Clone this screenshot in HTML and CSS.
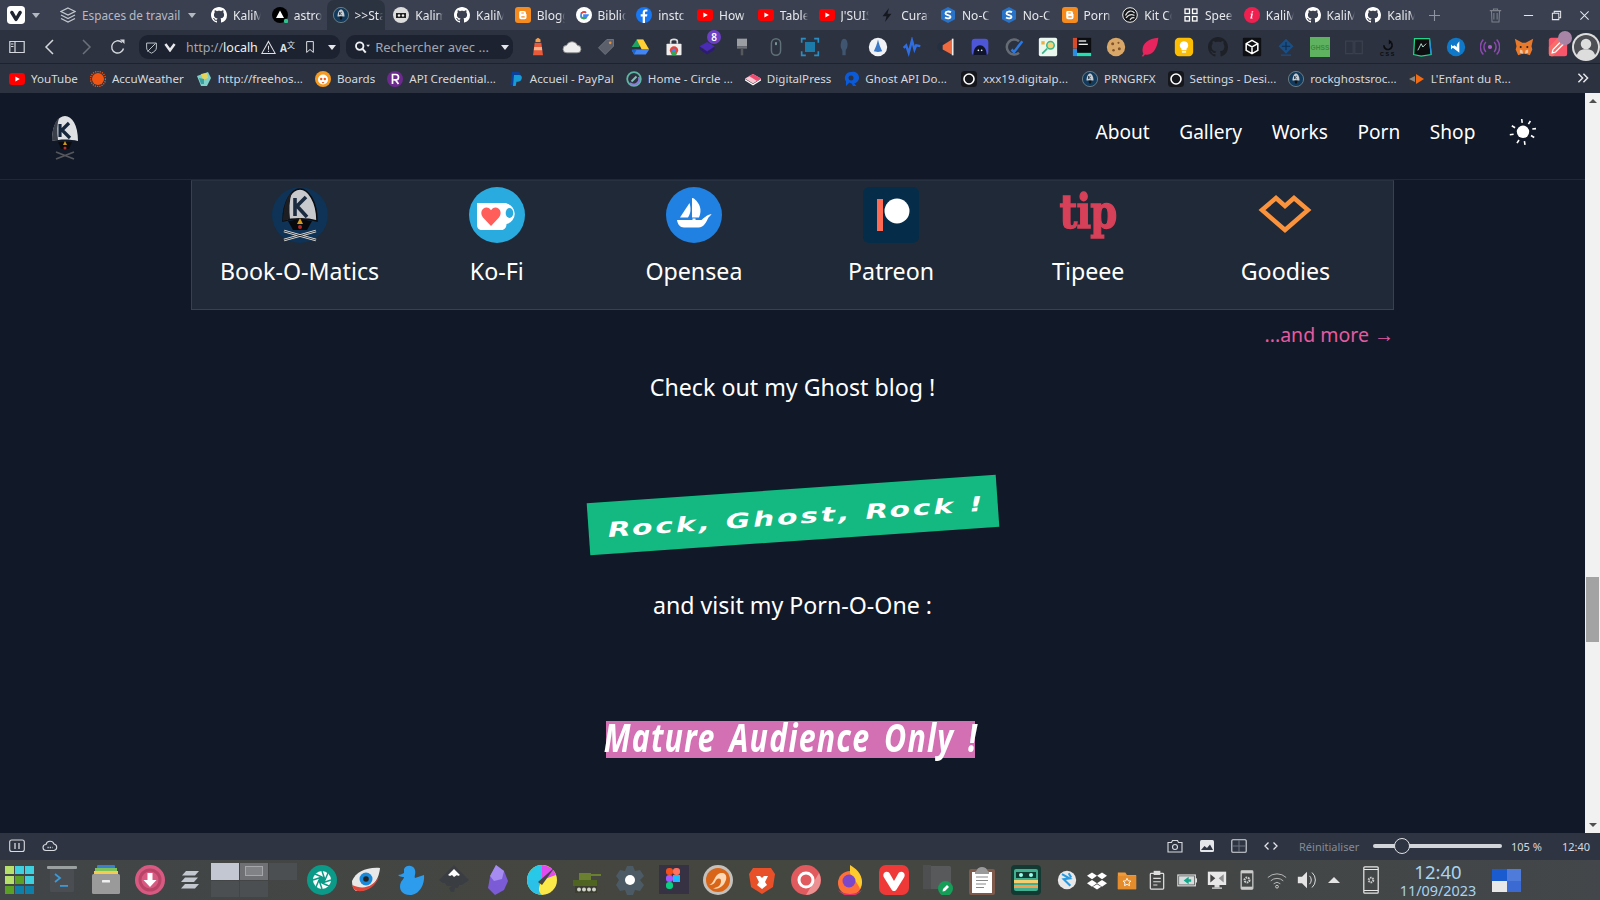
FILE: index.html
```html
<!DOCTYPE html>
<html lang="fr">
<head>
<meta charset="utf-8">
<title>Rock Ghost</title>
<link rel="stylesheet" href="styles.css">
</head>
<body>
<svg class="defs" xmlns="http://www.w3.org/2000/svg">
  <symbol id="gh" viewBox="0 0 16 16"><path fill="currentColor" d="M8 0C3.58 0 0 3.58 0 8c0 3.54 2.29 6.53 5.47 7.59.4.07.55-.17.55-.38 0-.19-.01-.82-.01-1.49-2.01.37-2.53-.49-2.69-.94-.09-.23-.48-.94-.82-1.13-.28-.15-.68-.52-.01-.53.63-.01 1.08.58 1.23.82.72 1.21 1.87.87 2.33.66.07-.52.28-.87.51-1.07-1.78-.2-3.64-.89-3.64-3.95 0-.87.31-1.59.82-2.15-.08-.2-.36-1.02.08-2.12 0 0 .67-.21 2.2.82.64-.18 1.32-.27 2-.27s1.36.09 2 .27c1.53-1.04 2.2-.82 2.2-.82.44 1.1.16 1.92.08 2.12.51.56.82 1.27.82 2.15 0 3.07-1.87 3.75-3.65 3.95.29.25.54.73.54 1.48 0 1.07-.01 1.93-.01 2.2 0 .21.15.46.55.38A8.013 8.013 0 0016 8c0-4.42-3.58-8-8-8z"/></symbol>
  <symbol id="yt" viewBox="0 0 16 16"><rect y="2" width="16" height="12" rx="3.2" fill="#f00"/><path d="M6.4 5.4v5.2L10.8 8z" fill="#fff"/></symbol>
  <symbol id="astro" viewBox="0 0 16 16"><circle cx="8" cy="8" r="8" fill="#000"/><path d="M8 3.5l4 7.5H4z" fill="#fff"/><circle cx="14" cy="14" r="2.2" fill="#2fc48d"/></symbol>
  <symbol id="skull" viewBox="0 0 16 16"><circle cx="8" cy="8" r="7.6" fill="#123a5c" stroke="#9aa" stroke-width=".6"/><path d="M4.5 9.5C4.5 5 6.5 2.4 8 2.4s3.500 2.600 3.500 7.100z" fill="#c9ccd0"/><path d="M6.500 9.500h3l-.6 3H7.100z" fill="#111"/><path d="M6.500 5v3M6.800 6.500l2-1.500M6.800 6.500l2 1.500" stroke="#1a2a3a" stroke-width=".8" fill="none"/></symbol>
  <symbol id="kali" viewBox="0 0 16 16"><circle cx="8" cy="8" r="8" fill="#ddd"/><path d="M3 6h10v5H3z" fill="#222"/><circle cx="6" cy="8.500" r="1.200" fill="#eee"/><circle cx="10" cy="8.500" r="1.200" fill="#eee"/></symbol>
  <symbol id="blogger" viewBox="0 0 16 16"><rect width="16" height="16" rx="3" fill="#f58a1f"/><path d="M5 4h4a2 2 0 012 2v1h.500v3.500A1.800 1.800 0 019.700 12.300H6A1.800 1.800 0 014.200 10.500V5z" fill="#fff"/><path d="M6.300 6h2.500M6.300 9.800h3.400" stroke="#f58a1f" stroke-width="1.200"/></symbol>
  <symbol id="google" viewBox="0 0 16 16"><circle cx="8" cy="8" r="8" fill="#fff"/><path d="M12.800 8H8v1.600h2.700A3 3 0 015 8a3 3 0 015-2.200" fill="none" stroke="#4285f4" stroke-width="1.700"/><path d="M5.200 6.500A3.200 3.200 0 0110 5.700" fill="none" stroke="#ea4335" stroke-width="1.700"/><path d="M5 9.500A3.200 3.200 0 0010.300 10.500" fill="none" stroke="#34a853" stroke-width="1.700"/></symbol>
  <symbol id="fb" viewBox="0 0 16 16"><circle cx="8" cy="8" r="8" fill="#1877f2"/><path d="M9 16V9.500h2l.4-2.300H9V5.800c0-.7.3-1.200 1.300-1.200h1.100v-2C11 2.500 10.400 2.400 9.800 2.400 8 2.400 6.700 3.500 6.700 5.500v1.700H4.700v2.300h2V16z" fill="#fff"/></symbol>
  <symbol id="bolt" viewBox="0 0 16 16"><path d="M10 1L3.500 9.200h4L6 15l6.500-8.300h-4z" fill="#15181f"/></symbol>
  <symbol id="nocode" viewBox="0 0 16 16"><path d="M8 0l7 3.800v8.400L8 16l-7-3.800V3.800z" fill="#2872c8"/><path d="M11 5.300C9 4 5.500 4.300 5.500 6.300c0 2.500 5 1.200 5 3.500 0 2-3.500 2-5.500.8" fill="none" stroke="#fff" stroke-width="1.800"/></symbol>
  <symbol id="kit" viewBox="0 0 16 16"><circle cx="8" cy="8" r="7.300" fill="#14161a" stroke="#eee" stroke-width="1"/><path d="M3.500 8.500C6 3 10 3 12.500 6M4 11c3-4 6-4 8.500-2.500M8 13c1-2 3-3 4.500-2" fill="none" stroke="#ddd" stroke-width="1.200"/></symbol>
  <symbol id="speed" viewBox="0 0 16 16"><g fill="none" stroke="#fff" stroke-width="1.300"><rect x="2" y="2" width="4.500" height="4.500"/><rect x="9.500" y="2" width="4.500" height="4.500"/><rect x="2" y="9.500" width="4.500" height="4.500"/><rect x="9.500" y="9.500" width="4.500" height="4.500"/></g></symbol>
  <symbol id="inf" viewBox="0 0 16 16"><circle cx="8" cy="8" r="8" fill="#ef2050"/><path d="M9.300 4.200h-1.500l-.3 1.300h1.500zM8.900 6.500H6.800l-.2.900h.8l-1.200 4.200h2.300l.2-.8h-.8z" fill="#fff"/></symbol>
  <symbol id="accu" viewBox="0 0 16 16"><circle cx="8" cy="8" r="6" fill="#f05514"/><circle cx="8" cy="8" r="7.500" fill="none" stroke="#f05514" stroke-width="1.400" stroke-dasharray="1.200 1.100"/></symbol>
  <symbol id="free" viewBox="0 0 16 16"><path d="M1 5l11-4 3 6-4 8H5z" fill="#7fd0c8"/><path d="M5 3l6-1 1 5-5 2z" fill="#e6d45a"/><path d="M3 7l5 1v5H5z" fill="#3aa0a0"/></symbol>
  <symbol id="boards" viewBox="0 0 16 16"><circle cx="8" cy="8" r="8" fill="#f59a23"/><circle cx="8" cy="8.500" r="5" fill="#fff"/><circle cx="6.200" cy="8" r="1.200" fill="#f05a14"/><circle cx="9.800" cy="8" r="1.200" fill="#f05a14"/><path d="M6.500 11h3L8 12.500z" fill="#f05a14"/></symbol>
  <symbol id="rr" viewBox="0 0 16 16"><circle cx="8" cy="8" r="8" fill="#6d2a8e"/><path d="M5.500 13V3.500h3.300a2.700 2.700 0 010 5.400H6.500M8.500 9l3 4" fill="none" stroke="#fff" stroke-width="1.700"/></symbol>
  <symbol id="paypal" viewBox="0 0 16 16"><path d="M4 1h5c3 0 4 2 3.300 4.300C11.700 7.500 10 8.500 8 8.500H6.500L5.500 14H2.500z" fill="#0a3f9c"/><path d="M6 4h5c2.500 0 3.300 1.800 2.700 3.800C13 10 11.500 10.700 9.800 10.700H8.500l-.8 4.300H5z" fill="#179bd7"/></symbol>
  <symbol id="circ" viewBox="0 0 16 16"><circle cx="8" cy="8" r="6.800" fill="none" stroke="#5db5a5" stroke-width="1.800"/><path d="M4 12A5.500 5.500 0 0012.800 6" fill="none" stroke="#8a7fd8" stroke-width="1.800"/><path d="M5.500 10.500L10.500 5.500" stroke="#7cc6b8" stroke-width="2"/></symbol>
  <symbol id="dp" viewBox="0 0 16 16"><path d="M8 3l8 4.500-8 5-8-5z" fill="#f9c8d4"/><path d="M8 3l8 4.500-4 2.500-8-5z" fill="#f04a70"/><path d="M0 8l8 5 8-5v1.500l-8 5-8-5z" fill="#fff"/></symbol>
  <symbol id="ghost" viewBox="0 0 16 16"><path d="M8 1a6 6 0 00-5 9.500L3 15l3.500-3.500A6 6 0 108 1zm0 3.500a2.500 2.500 0 110 5 2.500 2.500 0 010-5z" fill="#0b5bd8"/><path d="M10 11l3.500 4H10l-2-4z" fill="#0b5bd8"/></symbol>
  <symbol id="ring" viewBox="0 0 16 16"><rect width="16" height="16" rx="3.500" fill="#15171c"/><circle cx="8" cy="8" r="5" fill="none" stroke="#fff" stroke-width="1.600"/></symbol>
  <symbol id="enfant" viewBox="0 0 16 16"><path d="M0 0l8 8-8 8z" fill="#333"/><path d="M0 8l6-3v6z" fill="#888"/><path d="M7 3l8 5-8 5z" fill="#f46a10"/></symbol>
  <symbol id="vivaldi" viewBox="0 0 24 24"><rect width="24" height="24" rx="5" fill="#fff"/><path d="M5 7c1.500-1 3-.5 3.800 1l3.200 5.700L15.200 8c.8-1.500 2.300-2 3.800-1 1 .8 1 2 .4 3l-5.500 9c-1.100 1.700-2.700 1.700-3.800 0l-5.500-9c-.6-1-.6-2.200.4-3z" fill="#1f2430"/></symbol>
  <symbol id="e1" viewBox="0 0 24 24"><path d="M9 3l3-2 3 2v3H9z" fill="#f6a04c"/><path d="M8 7h8l2 15H6z" fill="#e85a3a"/><path d="M7.500 12h9l.5 4H7z" fill="#f7b48c"/></symbol>
  <symbol id="e2" viewBox="0 0 24 24"><path d="M6 19a4.500 4.500 0 01-.5-9A7 7 0 0118.500 10 4.500 4.500 0 0118 19z" fill="#eee" stroke="#888" stroke-width="1"/></symbol>
  <symbol id="e3" viewBox="0 0 24 24"><path d="M13 3h8v8L11 21l-8-8z" fill="#5b606c" stroke="#767b86"/><circle cx="17" cy="7" r="1.600" fill="#e8903a"/></symbol>
  <symbol id="e4" viewBox="0 0 24 24"><path d="M8 3h8l-5 9H2z" fill="#1ea362"/><path d="M16 3l7 12h-9L8 3z" fill="#ffcf33"/><path d="M2 16l3 5h14l4-6H7z" fill="#4285f4"/><path d="M2 15h6l-3 6z" fill="#1967d2"/></symbol>
  <symbol id="e5" viewBox="0 0 24 24"><rect x="3" y="8" width="18" height="14" rx="1" fill="#eee"/><path d="M8 8V5c0-3 8-3 8 0v3" fill="none" stroke="#ddd" stroke-width="2"/><circle cx="12" cy="16" r="5" fill="#ea4335"/><path d="M12 16l-4 4a5 5 0 008 0z" fill="#34a853"/><circle cx="12" cy="16" r="2.200" fill="#4285f4"/></symbol>
  <symbol id="e6" viewBox="0 0 24 24"><path d="M11 6l9 5-9 6-9-6z" fill="#4a2bb8"/><path d="M2 12l9 6 9-6v3l-9 6-9-6z" fill="#2e1a78"/></symbol>
  <symbol id="e7" viewBox="0 0 24 24"><rect x="6" y="2" width="12" height="9" fill="#9b9ea3"/><rect x="6" y="11" width="12" height="3" fill="#6e7176"/><rect x="10.500" y="14" width="3" height="8" fill="#55585d"/></symbol>
  <symbol id="e8" viewBox="0 0 24 24"><rect x="6.500" y="2" width="11" height="20" rx="5.500" fill="none" stroke="#5f7078" stroke-width="1.800"/><rect x="11" y="6" width="2" height="4" rx="1" fill="#8aa"/></symbol>
  <symbol id="e9" viewBox="0 0 24 24"><path d="M2 7V2h5M17 2h5v5M22 17v5h-5M7 22H2v-5" fill="none" stroke="#2a8ec4" stroke-width="2"/><rect x="6" y="6" width="12" height="12" fill="#1c7ba8"/></symbol>
  <symbol id="e10" viewBox="0 0 24 24"><path d="M12 2c4 0 5 6 4 10-.6 2.500-2 3-2 5v5h-4v-5c0-2-2-3-2-6 0-4 1-9 4-9z" fill="#3f5570"/></symbol>
  <symbol id="e11" viewBox="0 0 24 24"><circle cx="12" cy="12" r="11" fill="#f0f2f5"/><path d="M12 3c1 5 3 10 5 14l-5 1-5-1c2-4 4-9 5-14z" fill="#3a78c8"/></symbol>
  <symbol id="e12" viewBox="0 0 24 24"><path d="M2 13l3-3 3 9 4-15 3 11 2-5 5 1" fill="none" stroke="#2f6ee2" stroke-width="2.800"/></symbol>
  <symbol id="e13" viewBox="0 0 24 24"><circle cx="7" cy="12" r="5.500" fill="#223040"/><path d="M8 10l11-7v18L8 15z" fill="#ef6a3f"/><rect x="19" y="2" width="2" height="20" fill="#eee"/></symbol>
  <symbol id="e14" viewBox="0 0 24 24"><rect x="2" y="2" width="20" height="20" rx="4" fill="#4e56d8"/><path d="M4 22c0-7 3-12 8-12s8 5 8 12z" fill="#10142a"/><circle cx="10" cy="16" r="1" fill="#fff"/><circle cx="14" cy="16" r="1" fill="#fff"/></symbol>
  <symbol id="e15" viewBox="0 0 24 24"><path d="M18 5a9 9 0 100 14" fill="none" stroke="#666c76" stroke-width="3"/><path d="M9 15l3 3L22 5" fill="none" stroke="#2a78e0" stroke-width="3"/></symbol>
  <symbol id="e16" viewBox="0 0 24 24"><rect x="1" y="1" width="22" height="22" rx="2" fill="#e9f7ef"/><circle cx="15" cy="10" r="4.500" fill="#f3d27a" stroke="#38b58a" stroke-width="1.800"/><path d="M11 14l-6 6" stroke="#38b58a" stroke-width="2"/><rect x="4" y="5" width="4" height="4" fill="#f0b040"/></symbol>
  <symbol id="e17" viewBox="0 0 24 24"><rect x="1" y="1" width="22" height="22" fill="#0c0d10"/><rect x="1" y="1" width="5" height="13" fill="#d84b2a"/><rect x="1" y="14" width="5" height="9" fill="#2a8ee0"/><rect x="6" y="19" width="17" height="4" fill="#22e0b0"/><rect x="8" y="4" width="9" height="1.600" fill="#eee"/><rect x="8" y="8" width="11" height="1.600" fill="#eee"/></symbol>
  <symbol id="e18" viewBox="0 0 24 24"><circle cx="12" cy="12" r="11" fill="#d9a869"/><circle cx="8" cy="8" r="1.800" fill="#84552a"/><circle cx="15" cy="7" r="1.300" fill="#84552a"/><circle cx="16" cy="14" r="1.800" fill="#84552a"/><circle cx="9" cy="16" r="1.500" fill="#84552a"/></symbol>
  <symbol id="e19" viewBox="0 0 24 24"><path d="M22 1C10 2 3 8 3 16c0 2 .5 3 1 4l-2 3 2 .5 2-2.500c10 2 15-8 16-20z" fill="#e8245e"/></symbol>
  <symbol id="e20" viewBox="0 0 24 24"><rect x="1" y="1" width="22" height="22" rx="5" fill="#fbbc04"/><path d="M12 5a5 5 0 00-3 9v2h6v-2a5 5 0 00-3-9z" fill="#fff"/><rect x="9.500" y="17" width="5" height="1.800" fill="#fff"/></symbol>
  <symbol id="e22" viewBox="0 0 24 24"><rect x="1" y="1" width="22" height="22" rx="1" fill="#0e0f12"/><path d="M12 4l7 4v8l-7 4-7-4V8zM5 8l7 4 7-4M12 12v8" fill="none" stroke="#fff" stroke-width="1.800"/></symbol>
  <symbol id="e23" viewBox="0 0 24 24"><path d="M12 2l9 9-9 9-9-9z" fill="#1a4f86"/><path d="M12 6v10M7 11h10" stroke="#0d2d50" stroke-width="1.300"/><rect x="6" y="21" width="12" height="1.500" fill="#1a4f86"/></symbol>
  <symbol id="e24" viewBox="0 0 24 24"><rect width="24" height="24" fill="#5fb25f"/><text x="12" y="15" text-anchor="middle" font-family="Liberation Sans" font-size="8" font-weight="700" fill="#3d8a3f">GHSS</text></symbol>
  <symbol id="e25" viewBox="0 0 24 24"><path d="M2 5h9v15H2zM13 5h9v15h-9z" fill="none" stroke="#3a414e" stroke-width="1.500"/></symbol>
  <symbol id="e26" viewBox="0 0 24 24"><path d="M7 10a5 5 0 109-3" fill="none" stroke="#0b0c0f" stroke-width="2"/><path d="M13 3l4 3-4 3z" fill="#0b0c0f"/><text x="12" y="23" text-anchor="middle" font-family="Liberation Sans" font-size="6.500" font-weight="700" letter-spacing="2" fill="#0b0c0f">CSS</text></symbol>
  <symbol id="e27" viewBox="0 0 24 24"><path d="M3 2h18l2 19-12 2-9-2z" fill="#0d0d10" stroke="#21d789" stroke-width="1.500"/><path d="M7 16l4-8 2 4 4-4" fill="none" stroke="#cfe" stroke-width="1"/><path d="M21 2l2 19" stroke="#2a8ee0" stroke-width="1.500"/></symbol>
  <symbol id="e28" viewBox="0 0 24 24"><circle cx="12" cy="12" r="11" fill="#0f78c8"/><path d="M16 5v14l-9-7 3-2 3 2V9z" fill="#fff"/><path d="M6 9l3 3-3 3z" fill="#fff"/></symbol>
  <symbol id="e29" viewBox="0 0 24 24"><circle cx="12" cy="12" r="2.500" fill="#a85cc8"/><path d="M7 6a9 9 0 000 12M17 6a9 9 0 010 12M4 3a13 13 0 000 18M20 3a13 13 0 010 18" fill="none" stroke="#8c4ab0" stroke-width="1.800"/></symbol>
  <symbol id="e30" viewBox="0 0 24 24"><path d="M1 2l9 5h4l9-5-2 9 1 4-3 7-5-2h-4l-5 2-3-7 1-4z" fill="#e8782a"/><path d="M7 15l3 1 1 4-4-1zM17 15l-3 1-1 4 4-1z" fill="#f3c39a"/><circle cx="8" cy="12" r="1.200" fill="#222"/><circle cx="16" cy="12" r="1.200" fill="#222"/></symbol>
  <symbol id="e31" viewBox="0 0 24 24"><rect x="1" y="1" width="22" height="22" rx="3" fill="#f8566a"/><path d="M1 12L12 1h8a3 3 0 013 3v2L6 23H4a3 3 0 01-3-3z" fill="#f8786a" opacity=".7"/><path d="M5 19l1-4 9-9 3 3-9 9z" fill="none" stroke="#fff" stroke-width="1.500"/></symbol>
  <symbol id="avatar" viewBox="0 0 24 24"><circle cx="12" cy="12" r="12" fill="#ddd"/><circle cx="12" cy="12" r="10.300" fill="#4d4f55"/><circle cx="12" cy="9.500" r="4.500" fill="#ddd"/><path d="M4 20c1-5 4-6 8-6s7 1 8 6a12 12 0 01-16 0z" fill="#ddd"/></symbol>

  <symbol id="t-grid" viewBox="0 0 30 28"><g><rect x="0" y="0" width="9" height="8" fill="#b7e06b"/><rect x="10" y="0" width="9" height="8" fill="#3fd0e0"/><rect x="20" y="0" width="9" height="8" fill="#3fd0e0"/><rect x="0" y="10" width="9" height="8" fill="#b7e06b"/><rect x="10" y="10" width="9" height="8" fill="#5aa025"/><rect x="20" y="10" width="9" height="8" fill="#3fd0e0"/><rect x="0" y="20" width="9" height="8" fill="#5aa025"/><rect x="10" y="20" width="9" height="8" fill="#0e7fa8"/><rect x="20" y="20" width="9" height="8" fill="#0e7fa8"/></g></symbol>
  <symbol id="t-term" viewBox="0 0 30 30"><rect y="1" width="30" height="3" rx="1" fill="#9aa0a0"/><rect x="3" y="4" width="24" height="23" rx="1" fill="#4a4d52"/><path d="M8 9l5 4-5 4" fill="none" stroke="#3a9ad8" stroke-width="1.800"/><rect x="13" y="20" width="8" height="1.800" fill="#3a9ad8"/></symbol>
  <symbol id="t-files" viewBox="0 0 30 30"><rect x="6" y="0" width="18" height="5" rx="1" fill="#3a7fd0"/><rect x="4" y="3" width="22" height="5" fill="#7bc25a"/><rect x="3" y="6" width="24" height="5" fill="#f5cc50"/><rect x="1" y="9" width="28" height="20" rx="1.500" fill="#9a9a9a"/><rect x="11" y="15" width="8" height="2.500" rx=".5" fill="#eee"/></symbol>
  <symbol id="t-dl" viewBox="0 0 30 30"><circle cx="15" cy="15" r="15" fill="#d85a82"/><circle cx="15" cy="15" r="10" fill="none" stroke="#b84468" stroke-width="3"/><path d="M12.500 8h5v7h4l-6.500 7-6.500-7h4z" fill="#fff"/></symbol>
  <symbol id="t-stack" viewBox="0 0 20 22"><g fill="#c3c8d0"><path d="M6 2h13l-4 4.500H2z"/><path d="M5 8.500h13l-4 4.500H1z"/><path d="M5 15h14l-4 4.500H1z"/></g></symbol>
  <symbol id="t-shutter" viewBox="0 0 30 30"><circle cx="15" cy="15" r="15" fill="#0c9a88"/><circle cx="15" cy="15" r="9" fill="#fff"/><g stroke="#0c9a88" stroke-width="1.500"><path d="M15 6l3 9M24 15l-9 3M15 24l-3-9M6 15l9-3M21 8l-3 7M22 21l-7-3M9 22l3-7M8 9l7 3"/></g><circle cx="15" cy="15" r="3.500" fill="#0c9a88"/></symbol>
  <symbol id="t-eye" viewBox="0 0 30 30"><path d="M1 16C5 7 15 2 29 3 28 15 20 27 5 26c-3-2-4-6-4-10z" fill="#e8e8e8"/><path d="M1 20c1 3 2 5 5 6 10 1 18-4 22-14-5 8-14 14-27 8z" fill="#e0453a"/><circle cx="15" cy="14" r="6.500" fill="#1a88d8"/><circle cx="15" cy="14" r="2.800" fill="#222"/></symbol>
  <symbol id="t-duck" viewBox="0 0 30 30"><path d="M9 4a6 6 0 0111 1c1 4-1 6 0 8 3-1 6-2 9-3 1 10-5 20-14 20C7 30 3 24 6 17c1-2 3-3 3-5-1 0-4 0-6-2 2 0 4-1 6-2z" fill="#2d9cec"/></symbol>
  <symbol id="t-ink" viewBox="0 0 30 30"><path d="M15 0l15 15-7 5h-3l-1 3h-3l-1 4h-3l-2-4 3-2H8l-2-3H4l-4-3z" fill="#3a3d42"/><path d="M15 4l6 6-2 1-1-1-3 2-2-2-2 1-2-1z" fill="#fff"/></symbol>
  <symbol id="t-obs" viewBox="0 0 30 30"><path d="M13 0l8 6 4 10-4 9-9 5-7-7 2-11z" fill="#7c5bd6"/><path d="M13 0l8 6-2 8-8 2-4-5z" fill="#a68cf0"/></symbol>
  <symbol id="t-krita" viewBox="0 0 30 30"><circle cx="15" cy="15" r="15" fill="#fbe94a"/><path d="M15 0a15 15 0 00-15 15h15z" fill="#28c8e8"/><path d="M15 0a15 15 0 0114 10L15 15z" fill="#e04cf0"/><path d="M0 15a15 15 0 0015 15c-5-4-3-9 0-15z" fill="#2ac0e8"/><path d="M28 2L11 17l4 3z" fill="#444"/></symbol>
  <symbol id="t-tank" viewBox="0 0 30 30"><path d="M8 8h12v8H8z" fill="#6a7f30"/><rect x="20" y="9" width="10" height="2" fill="#6a7f30"/><path d="M2 15h24v6H2z" fill="#4f6420"/><path d="M4 21h22v7H4z" fill="#3a3d30"/><g fill="#cfd2c8"><circle cx="8" cy="24.500" r="2"/><circle cx="13" cy="24.500" r="2"/><circle cx="18" cy="24.500" r="2"/><circle cx="23" cy="24.500" r="2"/></g></symbol>
  <symbol id="t-gear" viewBox="0 0 30 30"><path d="M12 1h6l2 5 5-1 4 6-4 4 4 5-4 6-5-1-2 5h-6l-2-5-5 1-4-6 3-5-3-4 4-6 5 1z" fill="#4c5a66"/><circle cx="15" cy="15" r="5" fill="#fff"/></symbol>
  <symbol id="t-figma" viewBox="0 0 30 30"><rect width="30" height="29" fill="#363243"/><rect x="7" y="3" width="7" height="7" rx="3" fill="#f24e1e"/><rect x="14" y="3" width="7" height="7" rx="3" fill="#ff7262"/><rect x="7" y="10" width="7" height="7" rx="3" fill="#a259ff"/><rect x="14" y="10" width="7" height="7" fill="#1abcfe"/><rect x="7" y="17" width="7" height="7" rx="3" fill="#0acf83"/></symbol>
  <symbol id="t-phx" viewBox="0 0 30 30"><circle cx="15" cy="15" r="15" fill="#c4c0bc"/><circle cx="15" cy="15" r="12" fill="#f06a10"/><circle cx="15" cy="15" r="12" fill="#56514c" opacity=".15"/><path d="M6 20c6-1 5-13 14-12 4 1 4 6 2 9-2 5-8 8-12 6 4 0 8-2 8-7 0-3-3-3-5-1-1 3-3 5-7 5z" fill="#ffd8b8"/></symbol>
  <symbol id="t-brave" viewBox="0 0 30 30"><path d="M6 3h18l4 6-2 13-11 7-11-7L2 9z" fill="#e8502a"/><path d="M9 11h4l2 2 2-2h4l-3 6 2 3-5 4-5-4 2-3z" fill="#fff"/></symbol>
  <symbol id="t-opera" viewBox="0 0 30 30"><circle cx="15" cy="15" r="15" fill="#e05a5e"/><path d="M15 30a15 15 0 0013-22L15 30z" fill="#ec9092"/><circle cx="15" cy="15" r="7" fill="none" stroke="#fff" stroke-width="3"/></symbol>
  <symbol id="t-ff" viewBox="0 0 30 30"><circle cx="15" cy="18" r="12" fill="#ff7139"/><path d="M15 0c5 3 12 8 12 17 0 2-1 5-2 7-2-6-8-11-10-16 0-3 0-5 0-8z" fill="#ffca2e"/><circle cx="14" cy="16" r="6.500" fill="#7c47c8"/><path d="M3 25a14 12 0 0024 0 14 8 0 01-24 0z" fill="#e0356a"/></symbol>
  <symbol id="t-viv" viewBox="0 0 30 30"><rect width="30" height="30" rx="7" fill="#ef3939"/><path d="M5 8c2-2 5-1.500 6 1l4 7 4-7c1-2.500 4-3 6-1 1 1.500.8 3 0 4.500l-7.500 12c-1.300 2-3.700 2-5 0L5 12.500C4.200 11 4 9.500 5 8z" fill="#fff"/></symbol>
  <symbol id="t-note" viewBox="0 0 30 30"><rect y="1" width="28" height="23" rx="1.500" fill="#58595b"/><rect width="8" height="24" fill="#4e4f51"/><circle cx="22.500" cy="23.500" r="7.500" fill="#169d58"/><path d="M19.500 26.500l.5-2.500 4-4 2 2-4 4z" fill="#fff"/></symbol>
  <symbol id="t-clip" viewBox="0 0 30 30"><rect x="2" y="4" width="26" height="26" rx="2" fill="#7d5a4c"/><rect x="5" y="7" width="20" height="21" fill="#fff"/><path d="M10 5a5 3 0 0110 0l2 2v2H8V7z" fill="#9a9a9a"/><path d="M9 12h12M9 15.500h12M9 19h10M9 22.500h8" stroke="#888" stroke-width="1.100"/></symbol>
  <symbol id="t-cass" viewBox="0 0 30 30"><rect width="30" height="30" rx="4" fill="#133a32"/><rect x="3" y="4" width="24" height="22" rx="2" fill="#42b090"/><rect x="5" y="7" width="20" height="6" fill="#133a32"/><circle cx="10" cy="10" r="2" fill="#9fe"/><circle cx="20" cy="10" r="2" fill="#9fe"/><rect x="3" y="15" width="24" height="3" fill="#f4cf72"/><rect x="3" y="20" width="24" height="3" fill="#f0a050"/></symbol>
  <symbol id="s-kde" viewBox="0 0 24 24"><circle cx="12" cy="12" r="11" fill="#e8e8e8"/><path d="M6 5l9 5-7 1 8 8M14 4l3 5" fill="none" stroke="#2a9ae0" stroke-width="2.500"/></symbol>
  <symbol id="s-drop" viewBox="0 0 24 24"><g fill="#fff"><path d="M6 3l6 4-6 4-6-4z"/><path d="M18 3l6 4-6 4-6-4z"/><path d="M6 12l6 4-6 4-6-4z"/><path d="M18 12l6 4-6 4-6-4z"/><path d="M12 17l5 3-5 3.500-5-3.500z"/></g></symbol>
  <symbol id="s-folder" viewBox="0 0 24 24"><path d="M1 3h9l2 3h11v17H1z" fill="#f09a38"/><path d="M1 7h22v16H1z" fill="#e58c2c"/><path d="M12 10l1.500 3 3.200.4-2.300 2.200.6 3.200-3-1.600-3 1.600.6-3.200-2.300-2.200 3.200-.4z" fill="none" stroke="#fff" stroke-width="1.100"/></symbol>
  <symbol id="s-klip" viewBox="0 0 24 24"><rect x="4" y="4" width="16" height="19" rx="1" fill="none" stroke="#ddd" stroke-width="1.500"/><rect x="8" y="1" width="8" height="5" fill="#ddd"/><path d="M7.500 10h9M7.500 14h9M7.500 18h5" stroke="#ddd" stroke-width="1.300"/></symbol>
  <symbol id="s-batt" viewBox="0 0 24 24"><rect x="1" y="6" width="21" height="13" fill="none" stroke="#ddd" stroke-width="1.400"/><rect x="2.500" y="7.500" width="18" height="10" fill="#d8dcdc"/><rect x="22" y="10" width="2" height="5" fill="#ddd"/><path d="M14 8l-6 4.500 6 4.500v-3h3v-3h-3z" fill="#12a88a"/></symbol>
  <symbol id="s-disp" viewBox="0 0 24 24"><rect x="1" y="2" width="22" height="16" fill="#e8e8e8"/><path d="M4 5l6 5-6 5z" fill="#444"/><path d="M20 15l-6-5 6-5z" fill="#555" opacity=".6"/><rect x="9" y="18" width="6" height="3" fill="#ddd"/><rect x="6" y="21" width="12" height="1.500" fill="#ddd"/></symbol>
  <symbol id="s-phone" viewBox="0 0 24 24"><rect x="5" y="1" width="14" height="22" rx="1" fill="none" stroke="#ccc" stroke-width="1.500"/><circle cx="12" cy="12" r="3" fill="none" stroke="#ccc" stroke-width="2.500" stroke-dasharray="2 1"/><rect x="5" y="1" width="14" height="3" fill="#ccc"/><rect x="5" y="20" width="14" height="3" fill="#ccc"/></symbol>
  <symbol id="s-wifi" viewBox="0 0 24 24"><path d="M1 9a16 16 0 0122 0M4.500 13a11 11 0 0115 0M8 16.500a6 6 0 018 0" fill="none" stroke="#ccc" stroke-width="1"/><circle cx="12" cy="20" r="1.700" fill="none" stroke="#ddd" stroke-width="1"/></symbol>
  <symbol id="s-vol" viewBox="0 0 24 24"><path d="M1 8h5l6-6v20l-6-6H1z" fill="#e4e4e4"/><path d="M15 7a7 7 0 010 10M18 3a12 12 0 010 18" fill="none" stroke="#ddd" stroke-width="1.200"/></symbol>
</svg>

<header class="tabbar">
  <svg class="viv"><use href="#vivaldi"/></svg>
  <span class="caret caret-menu"></span>
  <svg class="wsicon" viewBox="0 0 16 16"><path d="M8 1l7 3.500L8 8 1 4.500zM1 8l7 3.500L15 8M1 11.500L8 15l7-3.500" fill="none" stroke="#c3c7cf" stroke-width="1.200"/></svg>
  <span class="ws">Espaces de travail</span>
  <span class="caret caret-ws"></span>
  <div class="tabs">
    <div class="tab"><svg class="fav wh"><use href="#gh"/></svg><span class="tabt">KaliM</span></div>
    <div class="tab"><svg class="fav"><use href="#astro"/></svg><span class="tabt">astro</span></div>
    <div class="tab active"><svg class="fav"><use href="#skull"/></svg><span class="tabt">&gt;&gt;Sta</span></div>
    <div class="tab"><svg class="fav"><use href="#kali"/></svg><span class="tabt">Kalim</span></div>
    <div class="tab"><svg class="fav wh"><use href="#gh"/></svg><span class="tabt">KaliM</span></div>
    <div class="tab"><svg class="fav"><use href="#blogger"/></svg><span class="tabt">Blogg</span></div>
    <div class="tab"><svg class="fav"><use href="#google"/></svg><span class="tabt">Biblic</span></div>
    <div class="tab"><svg class="fav"><use href="#fb"/></svg><span class="tabt">instc</span></div>
    <div class="tab"><svg class="fav"><use href="#yt"/></svg><span class="tabt">How</span></div>
    <div class="tab"><svg class="fav"><use href="#yt"/></svg><span class="tabt">Table</span></div>
    <div class="tab"><svg class="fav"><use href="#yt"/></svg><span class="tabt">J'SUIS</span></div>
    <div class="tab"><svg class="fav"><use href="#bolt"/></svg><span class="tabt">Curat</span></div>
    <div class="tab"><svg class="fav"><use href="#nocode"/></svg><span class="tabt">No-C</span></div>
    <div class="tab"><svg class="fav"><use href="#nocode"/></svg><span class="tabt">No-C</span></div>
    <div class="tab"><svg class="fav"><use href="#blogger"/></svg><span class="tabt">Porn</span></div>
    <div class="tab"><svg class="fav"><use href="#kit"/></svg><span class="tabt">Kit Cc</span></div>
    <div class="tab"><svg class="fav"><use href="#speed"/></svg><span class="tabt">Spee</span></div>
    <div class="tab"><svg class="fav"><use href="#inf"/></svg><span class="tabt">KaliM</span></div>
    <div class="tab"><svg class="fav wh"><use href="#gh"/></svg><span class="tabt">KaliM</span></div>
    <div class="tab"><svg class="fav wh"><use href="#gh"/></svg><span class="tabt">KaliM</span></div>
    <svg class="newtab" viewBox="0 0 12 12"><path d="M6 0v12M0 6h12" stroke="#8f94a0" stroke-width="1.200"/></svg>
  </div>
  <div class="winctl">
    <svg class="trash" viewBox="0 0 16 18"><path d="M1 3h14M5.500 3V1h5v2M3 3l.7 14h8.600L13 3M6 6v8M10 6v8" fill="none" stroke="#7b808b" stroke-width="1.300"/></svg>
    <span class="winbtn"><svg viewBox="0 0 12 12"><path d="M1 6h10" stroke="#e4e6ea" stroke-width="1.100"/></svg></span>
    <span class="winbtn"><svg viewBox="0 0 12 12"><path d="M1.500 3.500h7v7h-7zM3.500 3.500v-2h7v7h-2" fill="none" stroke="#e4e6ea" stroke-width="1.100"/></svg></span>
    <span class="winbtn"><svg viewBox="0 0 12 12"><path d="M1.500 1.500l9 9M10.500 1.500l-9 9" stroke="#e4e6ea" stroke-width="1.100"/></svg></span>
  </div>
</header>

<div class="addr">
  <svg class="ic ic-panel" viewBox="0 0 16 16"><path d="M.8 2.500h14.400v11H.8zM6 2.500v11M2 5h2.500M2 7.500h2.500" fill="none" stroke="#d4d7dd" stroke-width="1.200"/></svg>
  <svg class="ic ic-back" viewBox="0 0 16 16"><path d="M11 1L4 8l7 7" fill="none" stroke="#d4d7dd" stroke-width="1.500"/></svg>
  <svg class="ic ic-fwd" viewBox="0 0 16 16"><path d="M5 1l7 7-7 7" fill="none" stroke="#6b707b" stroke-width="1.500"/></svg>
  <svg class="ic ic-reload" viewBox="0 0 16 16"><path d="M13.500 9.500A6 6 0 112.500 5 6 6 0 0112 3.500" fill="none" stroke="#d4d7dd" stroke-width="1.400"/><path d="M10 .5h4.500V5z" fill="#d4d7dd"/></svg>
  <div class="urlbox">
    <svg class="u-sh" viewBox="0 0 16 16"><path d="M2 2.500h12v6c0 3-3 5-6 6.500-3-1.500-6-3.500-6-6.500zM3 13L13 3" fill="none" stroke="#c2c6ce" stroke-width="1.200"/></svg>
    <svg class="u-v" viewBox="0 0 14 12"><path d="M1.500 2.500L7 10l5.500-7.500" fill="none" stroke="#e6e8ec" stroke-width="3"/></svg>
    <span class="url"><span class="url-dim">http://</span>localh</span>
    <svg class="u-warn" viewBox="0 0 16 16"><path d="M8 1.500L15.200 14.500H.8zM8 6v4.500M8 11.500v1.200" fill="none" stroke="#dfe1e5" stroke-width="1.100"/></svg>
    <span class="u-tr">A<sup>文</sup></span>
    <svg class="u-bm" viewBox="0 0 12 16"><path d="M2 1.500h8v13l-4-3.500-4 3.500z" fill="none" stroke="#dfe1e5" stroke-width="1.200"/></svg>
    <span class="caret caret-lt"></span>
  </div>
  <div class="searchbox">
    <svg class="u-mag" viewBox="0 0 18 14"><circle cx="6" cy="5.500" r="4" fill="none" stroke="#eef0f3" stroke-width="2"/><path d="M9 8.500l3.500 4" stroke="#eef0f3" stroke-width="2.200"/><path d="M13 4h4l-2 2.500z" fill="#dfe1e5"/></svg>
    <span class="search-t">Rechercher avec ...</span>
    <span class="caret caret-lt"></span>
  </div>
  <div class="exts">
    <svg class="ext"><use href="#e1"/></svg>
    <svg class="ext"><use href="#e2"/></svg>
    <svg class="ext"><use href="#e3"/></svg>
    <svg class="ext"><use href="#e4"/></svg>
    <svg class="ext"><use href="#e5"/></svg>
    <span class="ext-w"><svg class="ext"><use href="#e6"/></svg><b class="badge">8</b></span>
    <svg class="ext"><use href="#e7"/></svg>
    <svg class="ext"><use href="#e8"/></svg>
    <svg class="ext"><use href="#e9"/></svg>
    <svg class="ext"><use href="#e10"/></svg>
    <svg class="ext"><use href="#e11"/></svg>
    <svg class="ext"><use href="#e12"/></svg>
    <svg class="ext"><use href="#e13"/></svg>
    <svg class="ext"><use href="#e14"/></svg>
    <svg class="ext"><use href="#e15"/></svg>
    <svg class="ext"><use href="#e16"/></svg>
    <svg class="ext"><use href="#e17"/></svg>
    <svg class="ext"><use href="#e18"/></svg>
    <svg class="ext"><use href="#e19"/></svg>
    <svg class="ext"><use href="#e20"/></svg>
    <svg class="ext dk"><use href="#gh"/></svg>
    <svg class="ext"><use href="#e22"/></svg>
    <svg class="ext"><use href="#e23"/></svg>
    <svg class="ext"><use href="#e24"/></svg>
    <svg class="ext"><use href="#e25"/></svg>
    <svg class="ext"><use href="#e26"/></svg>
    <svg class="ext"><use href="#e27"/></svg>
    <svg class="ext"><use href="#e28"/></svg>
    <svg class="ext"><use href="#e29"/></svg>
    <svg class="ext"><use href="#e30"/></svg>
    <span class="ext-w"><svg class="ext"><use href="#e31"/></svg><i class="dot"></i></span>
    <svg class="avatar"><use href="#avatar"/></svg>
  </div>
</div>

<nav class="bookmarks">
  <a class="bm"><svg class="fav"><use href="#yt"/></svg>YouTube</a>
  <a class="bm"><svg class="fav"><use href="#accu"/></svg>AccuWeather</a>
  <a class="bm"><svg class="fav"><use href="#free"/></svg>http://freehos...</a>
  <a class="bm"><svg class="fav"><use href="#boards"/></svg>Boards</a>
  <a class="bm"><svg class="fav"><use href="#rr"/></svg>API Credential...</a>
  <a class="bm"><svg class="fav"><use href="#paypal"/></svg>Accueil - PayPal</a>
  <a class="bm"><svg class="fav"><use href="#circ"/></svg>Home - Circle ...</a>
  <a class="bm"><svg class="fav"><use href="#dp"/></svg>DigitalPress</a>
  <a class="bm"><svg class="fav"><use href="#ghost"/></svg>Ghost API Do...</a>
  <a class="bm bm-wide"><svg class="fav"><use href="#ring"/></svg>xxx19.digitalp...</a>
  <a class="bm bm-wide"><svg class="fav"><use href="#skull"/></svg>PRNGRFX</a>
  <a class="bm"><svg class="fav"><use href="#ring"/></svg>Settings - Desi...</a>
  <a class="bm"><svg class="fav"><use href="#skull"/></svg>rockghostsroc...</a>
  <a class="bm"><svg class="fav"><use href="#enfant"/></svg>L'Enfant du R...</a>
  <svg class="more" viewBox="0 0 14 12"><path d="M1.500 1l5 5-5 5M7.500 1l5 5-5 5" fill="none" stroke="#e4e6ea" stroke-width="1.800"/></svg>
</nav>

<div class="viewport">
  <main class="page">
    <div class="sitehead">
      <svg class="sitelogo" viewBox="0 0 32 46">
        <path d="M3 26C3 10 9 1 16 1s13 9 13 25c-8-2-18-2-26 0z" fill="#dfe0e4"/>
        <path d="M3 26C3 14 6 6 10 3c-2 6-2 14-1 22z" fill="#3a3f4a"/>
        <path d="M11 9v13M12 16l8-8M13 15l8 8" fill="none" stroke="#16263c" stroke-width="3.200"/>
        <path d="M9 27h14l-3 7h-8z" fill="#0c0c10"/>
        <path d="M16 26l2 4h-4z" fill="#d09a20"/>
        <path d="M7 37l18 7M25 37L7 44" stroke="#55575d" stroke-width="1.800"/>
        <circle cx="16" cy="33" r="1.500" fill="#b03030"/>
      </svg>
      <div class="sitenav">
        <a>About</a><a>Gallery</a><a>Works</a><a>Porn</a><a>Shop</a>
        <svg class="sun" viewBox="0 0 28 28"><circle cx="14" cy="13.800" r="6.200" fill="#fff"/><g stroke="#fff" stroke-width="1.600"><path d="M12.700 1l.5 3.800M21.400 3l-2 3.200M27 10.600l-3.700.4M25.200 19.500l-3.200-2M16 26.800l-.6-3.700M8 25.200l2-3.200M.8 16.800l3.800-.5M2.800 7.800l3.300 2"/></g></svg>
      </div>
    </div>
    <section class="links">
      <a class="link">
        <svg class="logo56" viewBox="0 0 56 56">
          <circle cx="28" cy="28" r="28" fill="#0e3356"/>
          <path d="M11 34C11 14 20 2 28 2s17 12 17 32c-10-3-24-3-34 0z" fill="#c8c9cc" stroke="#0b0c10" stroke-width="1.500"/>
          <path d="M11 34C11 20 15 9 20 5c-3 9-3 18-2 27z" fill="#1c1e24"/>
          <path d="M23 11v18M24 20l10-10M25 19l10 11" fill="none" stroke="#1b2b40" stroke-width="3.600"/>
          <path d="M16 34c8-2 16-2 24 0l-5 9h-14z" fill="#08090c"/>
          <path d="M28 31l3 6h-6z" fill="#d49a22"/><circle cx="28" cy="40" r="2" fill="#b02a2a"/>
          <path d="M12 44l32 9M44 44l-32 9" stroke="#e4e4e4" stroke-width="2.400"/>
          <path d="M12 44l32 9M44 44l-32 9" stroke="#111" stroke-width=".8"/>
        </svg>
        <span class="linkt">Book-O-Matics</span>
      </a>
      <a class="link">
        <svg class="logo56" viewBox="0 0 56 56">
          <circle cx="28" cy="28" r="28" fill="#29abe0"/>
          <path d="M8 16h29.500v.5a10.500 10.500 0 010 20.500c0 3.500-2 6-5 6H13c-3 0-5-2-5-5z" fill="#fff"/>
          <ellipse cx="40.500" cy="26" rx="3.800" ry="5" fill="#29abe0"/>
          <path d="M22 39l-8-8.500C10.500 26 13 20.500 17.500 20.500c2 0 3.500 1.200 4.500 2.800 1-1.600 2.500-2.800 4.500-2.800C31 20.500 33.500 26 30 30.500z" fill="#ff5e5b"/>
        </svg>
        <span class="linkt">Ko-Fi</span>
      </a>
      <a class="link">
        <svg class="logo56" viewBox="0 0 56 56">
          <circle cx="28" cy="28" r="28" fill="#2081e2"/>
          <path d="M14 30.500L23.500 16c1.500 5 1.500 10-1.500 14.500z" fill="#fff"/>
          <path d="M26 11c2 .3 3 1.400 3 1.400 4.500 4 7.500 10 4 18.100H26z" fill="#fff"/>
          <path d="M11 33h15.500v-1.500h3V33h6c2.500-2 5-5 10-6-.3 1-1.500 2-3 3.500-2 4-4.500 10-10 10H18c-4 0-6.500-3.500-7-7.500z" fill="#fff"/>
        </svg>
        <span class="linkt">Opensea</span>
      </a>
      <a class="link">
        <svg class="logo56" viewBox="0 0 56 56">
          <rect width="56" height="56" rx="6" fill="#052d49"/>
          <rect x="14" y="12" width="6" height="32" fill="#ff6a54"/>
          <circle cx="34" cy="24" r="12.500" fill="#fff"/>
        </svg>
        <span class="linkt">Patreon</span>
      </a>
      <a class="link">
        <span class="tipbox"><span class="tiplogo">tip</span></span>
        <span class="linkt">Tipeee</span>
      </a>
      <a class="link">
        <svg class="logo56" viewBox="0 0 56 56">
          <path d="M5 23l14-12 9 8 9-8 14 12-23 20z" fill="none" stroke="#fb923c" stroke-width="4.500"/>
        </svg>
        <span class="linkt">Goodies</span>
      </a>
    </section>
    <a class="andmore">...and more <span class="arrow">→</span></a>
    <p class="para para-ghost">Check out my Ghost blog !</p>
    <a class="rgr"><span class="rgr-t">Rock, Ghost, Rock !</span></a>
    <p class="para para-visit">and visit my Porn-O-One :</p>
    <div class="mature"><span class="mature-t">Mature Audience Only !</span></div>
  </main>
  <aside class="scrollbar">
    <span class="sc-up"></span>
    <span class="sc-thumb"></span>
    <span class="sc-down"></span>
  </aside>
</div>

<footer class="status">
  <svg class="st st-l1" viewBox="0 0 16 14"><rect x=".7" y="1" width="14.600" height="11.500" rx="2" fill="none" stroke="#d8dbe0" stroke-width="1.100"/><path d="M6 4v6M10 4v6" stroke="#d8dbe0" stroke-width="1.300"/></svg>
  <svg class="st st-l2" viewBox="0 0 16 14"><path d="M4 11.500a3 3 0 010-6 4.200 4.200 0 018-.5 3.300 3.300 0 010 6.500z" fill="none" stroke="#d8dbe0" stroke-width="1.100"/><path d="M5.500 8.500h5" stroke="#d8dbe0" stroke-width="1.400" stroke-dasharray="1.200 1"/></svg>
  <div class="st-right">
    <svg class="st st-r" viewBox="0 0 16 14"><path d="M1 3.500h3.500l1-2h5l1 2H15v9.500H1z" fill="none" stroke="#d8dbe0" stroke-width="1.100"/><circle cx="8" cy="8" r="2.500" fill="none" stroke="#d8dbe0" stroke-width="1.100"/></svg>
    <svg class="st st-r" viewBox="0 0 16 14"><rect x="1" y="1" width="14" height="12" rx="1.500" fill="#e4e6ea"/><path d="M2 11l3.500-4 2.500 2 3-3.500 3 5.500z" fill="#2d3442"/></svg>
    <svg class="st st-r" viewBox="0 0 16 14"><rect x=".8" y=".8" width="14.400" height="12.400" rx="1" fill="none" stroke="#d8dbe0" stroke-width="1.100"/><path d="M8 1v12M1 7h14" stroke="#6c7280" stroke-width="1"/></svg>
    <svg class="st st-r" viewBox="0 0 16 14"><path d="M5.500 3.500L2 7l3.500 3.500M10.500 3.500L14 7l-3.500 3.500" fill="none" stroke="#e4e6ea" stroke-width="1.300"/></svg>
    <span class="reset">Réinitialiser</span>
    <span class="slider"><i class="knob"></i></span>
    <span class="zoomv">105 %</span>
    <span class="clock">12:40</span>
  </div>
</footer>

<footer class="taskbar">
  <svg class="tb-grid"><use href="#t-grid"/></svg>
  <svg class="app app-f"><use href="#t-term"/></svg>
  <svg class="app"><use href="#t-files"/></svg>
  <svg class="app"><use href="#t-dl"/></svg>
  <svg class="app-s"><use href="#t-stack"/></svg>
  <div class="pager">
    <span class="pg pg-on"></span><span class="pg pg-mid"><i></i></span><span class="pg"></span>
    <span class="pg"></span><span class="pg"></span><span class="pg pg-void"></span>
  </div>
  <svg class="app app-a"><use href="#t-shutter"/></svg>
  <svg class="app"><use href="#t-eye"/></svg>
  <svg class="app"><use href="#t-duck"/></svg>
  <svg class="app"><use href="#t-ink"/></svg>
  <svg class="app"><use href="#t-obs"/></svg>
  <svg class="app"><use href="#t-krita"/></svg>
  <svg class="app"><use href="#t-tank"/></svg>
  <svg class="app"><use href="#t-gear"/></svg>
  <svg class="app"><use href="#t-figma"/></svg>
  <svg class="app"><use href="#t-phx"/></svg>
  <svg class="app"><use href="#t-brave"/></svg>
  <svg class="app"><use href="#t-opera"/></svg>
  <svg class="app"><use href="#t-ff"/></svg>
  <svg class="app"><use href="#t-viv"/></svg>
  <svg class="app"><use href="#t-note"/></svg>
  <svg class="app"><use href="#t-clip"/></svg>
  <svg class="app"><use href="#t-cass"/></svg>
  <div class="tray">
    <svg class="tr tr-first"><use href="#s-kde"/></svg>
    <svg class="tr"><use href="#s-drop"/></svg>
    <svg class="tr"><use href="#s-folder"/></svg>
    <svg class="tr"><use href="#s-klip"/></svg>
    <svg class="tr"><use href="#s-batt"/></svg>
    <svg class="tr"><use href="#s-disp"/></svg>
    <svg class="tr"><use href="#s-phone"/></svg>
    <svg class="tr"><use href="#s-wifi"/></svg>
    <svg class="tr"><use href="#s-vol"/></svg>
    <span class="tr-up"></span>
    <svg class="tr-phone" viewBox="0 0 16 28"><rect x=".8" y=".8" width="14.400" height="26.400" rx="1" fill="none" stroke="#e8e8e8" stroke-width="1.200"/><path d="M1 3.500h14M1 24.500h14" stroke="#e8e8e8" stroke-width="1"/><circle cx="8" cy="14" r="2.300" fill="none" stroke="#c8c8c8" stroke-width="2" stroke-dasharray="1.500 .7"/></svg>
    <div class="dt"><span class="dt-time">12:40</span><span class="dt-date">11/09/2023</span></div>
    <div class="desk"><i class="d1"></i><i class="d2"></i><i class="d3"></i><i class="d4"></i></div>
  </div>
</footer>
</body>
</html>
```

FILE: styles.css
```css
* { box-sizing: border-box; }
html, body { margin: 0; height: 100%; }
body {
  display: flex;
  flex-direction: column;
  height: 900px;
  width: 1600px;
  overflow: hidden;
  font-family: "Noto Sans", sans-serif;
  background: #111827;
  color: #fff;
}
.defs { display: none; }
svg { display: block; flex: none; }
.fav { width: 16px; height: 16px; }
.wh { color: #fff; }

.caret { width: 0; height: 0; border-left: 4.500px solid transparent; border-right: 4.500px solid transparent; border-top: 5px solid #b4b8c1; flex: none; }
.caret-lt { border-top-color: #e4e6ea; }

/* tab bar */
.tabbar { height: 30px; flex: none; background: #3a4050; display: flex; align-items: center; padding-left: 7px; }
.viv { width: 18px; height: 18px; }
.caret-menu { margin-left: 7px; }
.wsicon { width: 16px; height: 16px; margin-left: 20px; }
.ws { font-size: 11.800px; color: #b6bac3; margin-left: 6px; white-space: nowrap; width: 100px; }
.caret-ws { margin-left: 6px; }
.tabs { display: flex; align-items: flex-end; height: 30px; margin-left: 9px; gap: 2.750px; }
.tab { width: 58px; height: 30px; display: flex; align-items: center; padding-left: 6px; gap: 6px; border-radius: 7px 7px 0 0; overflow: hidden; }
.tab.active { background: #2c3340; }
.tabt {
  font-size: 12px; width: 28px; overflow: hidden; white-space: nowrap; color: #e6e8ec;
  -webkit-mask-image: linear-gradient(90deg, #000 80%, transparent);
  mask-image: linear-gradient(90deg, #000 80%, transparent);
}
.newtab { width: 11px; height: 11px; align-self: center; margin-left: 9px; }
.winctl { margin-left: auto; display: flex; align-items: center; padding-right: 2px; }
.trash { width: 13px; height: 15px; margin-right: 12px; }
.winbtn { width: 28px; height: 24px; display: flex; align-items: center; justify-content: center; }
.winbtn svg { width: 11px; height: 11px; }

/* address row */
.addr { height: 34px; flex: none; background: #2c323f; display: flex; align-items: center; position: relative; border-bottom: 1px solid #1d222c; padding-top: 1px; }
.ic { width: 16px; height: 16px; }
.ic-panel { margin-left: 9px; }
.ic-back { margin-left: 17px; }
.ic-fwd { margin-left: 20px; }
.ic-reload { margin-left: 16px; }
.urlbox { margin-left: 13px; width: 205px; height: 24px; border-radius: 9px; background: #1c2230; display: flex; align-items: center; padding-left: 6px; }
.u-sh { width: 13px; height: 13px; }
.u-v { width: 12px; height: 10px; margin-left: 6px; }
.url { font-size: 12.500px; margin-left: 10px; width: 74px; overflow: hidden; white-space: nowrap; color: #eef0f3; }
.url-dim { color: #a2a6af; }
.u-warn { width: 15px; height: 15px; margin-left: 1px; }
.u-tr { font-size: 10px; font-weight: 700; width: 16px; margin-left: 4px; color: #dfe1e5; white-space: nowrap; line-height: 1; }
.u-tr sup { font-size: 8px; font-family: "Noto Sans CJK SC", sans-serif; font-weight: 400; }
.u-bm { width: 10px; height: 14px; margin-left: 9px; }
.urlbox .caret { margin-left: 13px; }
.searchbox { margin-left: 6px; width: 170px; height: 24px; border-radius: 9px; background: #1c2230; display: flex; align-items: center; padding-left: 8px; }
.u-mag { width: 17px; height: 13px; }
.search-t { font-size: 13px; color: #a2a6af; margin-left: 4px; width: 122px; white-space: nowrap; }
.searchbox .caret { margin-left: 4px; }
.exts { display: flex; align-items: center; margin-left: 15px; gap: 14px; }
.ext { width: 20px; height: 20px; }
.ext-w { width: 20px; height: 20px; position: relative; display: block; flex: none; }
.dk { color: #1d2026; }
.badge { position: absolute; left: 9px; top: -7px; width: 14px; height: 14px; border-radius: 50%; background: #6d3fc4; font-size: 10px; line-height: 14px; text-align: center; color: #fff; font-weight: 600; }
.dot { position: absolute; left: 10px; top: -6px; width: 14px; height: 14px; border-radius: 50%; background: #a884a6; }
.avatar { width: 28px; height: 28px; margin-left: -10px; }

/* bookmarks */
.bookmarks { height: 29px; flex: none; background: #2c323f; display: flex; align-items: center; padding-left: 9px; gap: 12px; }
.bm { display: flex; align-items: center; gap: 6px; font-size: 11.600px; color: #d6d9de; white-space: nowrap; }
.bm-wide { margin-left: 2px; }
.more { width: 12px; height: 10px; position: absolute; left: 1577px; top: 73px; }

/* page */
.viewport { flex: 1; display: flex; min-height: 0; }
.page { flex: 1; min-width: 0; background: #111827; display: flex; flex-direction: column; align-items: center; }
.sitehead { width: 100%; height: 87px; flex: none; display: flex; align-items: center; justify-content: space-between; padding: 0 48px 0 49px; border-bottom: 1px solid #1f2937; }
.sitelogo { width: 32px; height: 46px; margin-top: 3px; }
.sitenav { display: flex; align-items: center; gap: 29.600px; font-size: 19.100px; margin-bottom: 8px; }
.sun { width: 28px; height: 28px; margin-left: 4px; }
.links { width: 1203px; height: 130px; flex: none; background: #1f2937; border: 1px solid #374151; border-top-color: #273140; padding: 6px 9px 0; display: grid; grid-template-columns: repeat(6, 1fr); }
.link { display: flex; flex-direction: column; align-items: center; }
.logo56 { width: 56px; height: 56px; }
.linkt { font-size: 23.200px; line-height: 34px; margin-top: 11px; color: #fff; white-space: nowrap; }
.tipbox { height: 56px; width: 56px; display: flex; justify-content: center; flex: none; }
.tiplogo { display: block; font-family: "DejaVu Serif", serif; font-weight: 700; font-size: 46px; line-height: 50px; color: #d64058; -webkit-text-stroke: 1.400px #d64058; transform: scaleX(.84); letter-spacing: -1px; }
.andmore { width: 1203px; text-align: right; font-size: 19.500px; line-height: 30px; margin-top: 10px; color: #e85a9f; flex: none; }
.arrow { font-size: 20px; }
.para { margin: 0; font-size: 23.200px; line-height: 34px; flex: none; color: #fff; }
.para-ghost { margin-top: 20px; }
.rgr { margin-top: 85px; width: 410px; height: 52px; flex: none; background: #14b981; transform: rotate(-4deg); display: flex; justify-content: center; }
.rgr-t { display: block; font-family: "DejaVu Sans", sans-serif; font-weight: 700; font-style: italic; font-size: 20.500px; letter-spacing: 2px; color: #fff; line-height: 56px; white-space: nowrap; transform: translateX(4px) scaleX(1.45); flex: none; }
.para-visit { margin-top: 47px; }
.mature { margin-top: 99px; width: 369px; height: 37px; flex: none; background: #d36fb3; margin-right: 4px; display: flex; justify-content: center; }
.mature-t { display: block; font-family: "Noto Sans", sans-serif; font-weight: 700; font-style: italic; font-size: 39px; line-height: 31px; letter-spacing: 1.500px; word-spacing: 6px; color: #fff; white-space: nowrap; transform: scaleX(.78); flex: none; }

/* scrollbar */
.scrollbar { width: 15px; flex: none; background: #f1f1f1; display: flex; flex-direction: column; align-items: center; position: relative; }
.sc-up { margin-top: 6px; width: 0; height: 0; border-left: 4px solid transparent; border-right: 4px solid transparent; border-bottom: 4px solid #505050; }
.sc-thumb { margin-top: 474px; width: 13px; height: 65px; background: #a3a3a3; }
.sc-down { margin-top: auto; margin-bottom: 6px; width: 0; height: 0; border-left: 4px solid transparent; border-right: 4px solid transparent; border-top: 4px solid #505050; }

/* status */
.status { height: 27px; flex: none; background: #2e3441; display: flex; align-items: center; padding-bottom: 1px; }
.st { width: 16px; height: 14px; }
.st-l1 { margin-left: 9px; }
.st-l2 { margin-left: 17px; }
.st-right { margin-left: auto; display: flex; align-items: center; }
.st-r { margin-right: 16px; }
.reset { font-size: 11px; color: #868b96; width: 74px; white-space: nowrap; margin-left: 4px; }
.slider { width: 129px; height: 4px; background: #d2d5da; border-radius: 2px; position: relative; display: block; }
.knob { position: absolute; left: 21px; top: -6px; width: 16px; height: 16px; border-radius: 50%; background: #2e3441; border: 1.500px solid #dfe1e5; }
.zoomv { font-size: 11px; color: #d6d9de; margin-left: 9px; width: 51px; }
.clock { font-size: 11px; color: #d6d9de; margin-right: 9px; width: 29px; }

/* taskbar */
.taskbar { height: 40px; flex: none; background: linear-gradient(90deg, #414548, #45463f 40%, #43464a); display: flex; align-items: center; padding-left: 5px; }
.tb-grid { width: 30px; height: 28px; }
.app { width: 30px; height: 30px; margin-left: 14px; }
.app-f { margin-left: 12px; }
.app-s { width: 20px; height: 22px; margin-left: 15px; }
.pager { display: grid; grid-template-columns: repeat(3, 28px); grid-auto-rows: 16.500px; gap: 1px; margin-left: 11px; height: 34px; }
.pg { background: #4c4f52; display: flex; align-items: center; justify-content: center; }
.pg-on { background: #c3c7d1; }
.pg-mid { background: #6e7073; }
.pg-mid i { width: 18px; height: 10px; border: 1px solid #a4a6a9; background: #808285; display: block; }
.pg-void { background: transparent; }
.app-a { margin-left: 10px; }
.tray { display: flex; align-items: center; margin-left: 16px; }
.tr { width: 20px; height: 20px; margin-right: 10px; }
.tr-up { width: 0; height: 0; border-left: 6px solid transparent; border-right: 6px solid transparent; border-bottom: 6px solid #e4e4e4; margin-left: 1px; }
.tr-phone { width: 16px; height: 28px; margin-left: 23px; }
.dt { display: flex; flex-direction: column; align-items: center; width: 90px; margin-left: 14px; color: #a8d4f0; }
.dt-time { font-size: 18.500px; line-height: 22px; }
.dt-date { font-size: 14.400px; line-height: 16px; }
.desk { display: grid; grid-template-columns: 15px 14px; grid-template-rows: 12px 11px; margin-left: 9px; }
.desk i { display: block; }
.d1 { background: #1a5bd0; } .d2 { background: #4f7cdb; } .d3 { background: #e8e8e8; } .d4 { background: #3a6ad2; }
```
